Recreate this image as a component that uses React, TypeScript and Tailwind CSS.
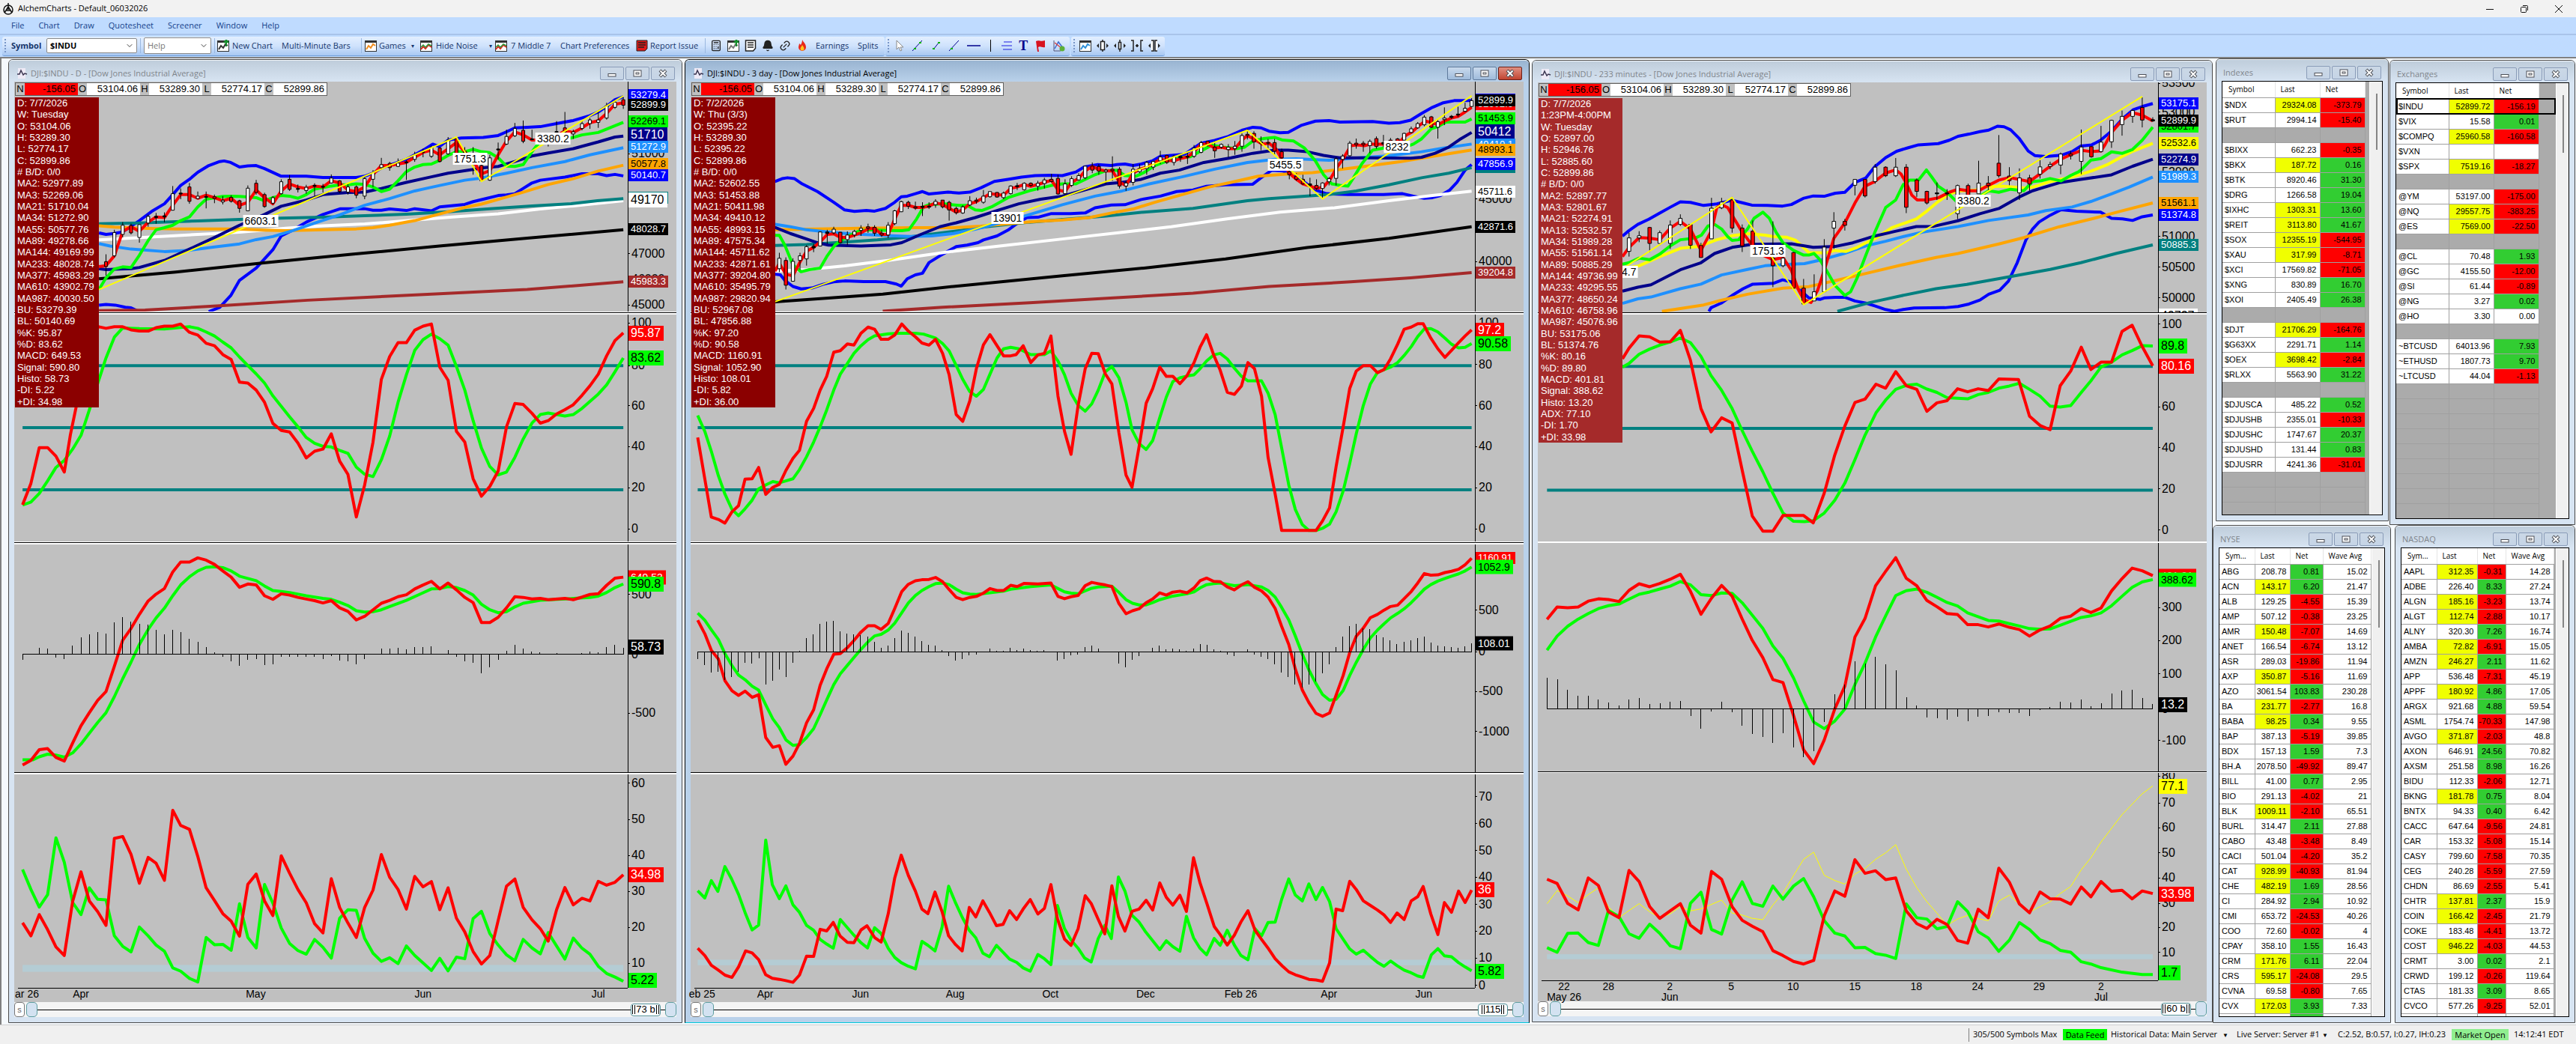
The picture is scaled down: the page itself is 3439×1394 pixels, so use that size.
import React from "react";
import { Bell, Link2, Calculator, ChevronDown } from "lucide-react";

type Tag = { y: number; t: string; c?: string };
type Line = { c: string; w: number; p: string };
type Frame = { x: number; w: number; x0: number; x1: number };

const RED = "#ff0000";
const LIME = "#00ff00";
const BLUE = "#0000ff";
const NAVY = "#00008b";
const SKY = "#1e90ff";
const ORANGE = "#ffa500";
const TEAL = "#008080";
const BROWN = "#a52a2a";
const YELLOW = "#ffff00";

const tagClass: Record<string, string> = {
  red: "bg-[#ff0000] text-white",
  lime: "bg-[#00ff00] text-black",
  blue: "bg-[#0000ff] text-white",
  navy: "bg-[#00008b] text-white",
  sky: "bg-[#1e90ff] text-white",
  orange: "bg-[#ffa500] text-black",
  teal: "bg-[#008080] text-white",
  brown: "bg-[#a52a2a] text-white",
  yellow: "bg-[#ffff00] text-black",
  white: "bg-white text-black",
  black: "bg-black text-white",
};

const pct = (n: number) => `${n * 100}%`;

function tagSize(t: string) {
  if (t.length >= 7) return "h-4 text-[13px] leading-4 w-[53px]";
  if (t.length === 6) return "h-[19px] text-[14px] leading-[19px] pr-1";
  return "h-5 text-[16px] leading-5 pr-1";
}

function Axis({ y, h, tags, open }: { y: number; h: number; tags: Tag[]; open?: boolean }) {
  return (
    <div className={`relative w-[65px] shrink-0 border-l border-black ${open ? "" : "overflow-hidden"}`}>
      {tags.map((g, i) =>
        g.c ? (
          <span
            key={i}
            className={`absolute left-0 -translate-y-1/2 whitespace-nowrap pl-[3px] ${tagSize(g.t)} ${tagClass[g.c]}`}
            style={{ top: pct((g.y - y) / h) }}
          >
            {g.t}
          </span>
        ) : (
          <span
            key={i}
            className="absolute left-0 flex -translate-y-1/2 items-center gap-0.5 whitespace-nowrap text-[16px] leading-5 text-black"
            style={{ top: pct((g.y - y) / h) }}
          >
            <i className="h-px w-0.5 bg-black" />
            {g.t}
          </span>
        )
      )}
    </div>
  );
}

function Plot({ f, y, h, children }: { f: Frame; y: number; h: number; children: React.ReactNode }) {
  return (
    <svg viewBox={`${f.x} ${y} ${f.w} ${h}`} preserveAspectRatio="none" className="absolute inset-0 size-full" aria-hidden="true">
      {children}
    </svg>
  );
}

function Lines({ items }: { items: Line[] }) {
  return (
    <>
      {items.map((l, i) => (
        <polyline key={i} points={l.p} fill="none" stroke={l.c} strokeWidth={l.w} strokeLinejoin="round" vectorEffect="non-scaling-stroke" />
      ))}
    </>
  );
}

function Candles({ data, w }: { data: string; w: number }) {
  return (
    <>
      {data.split(" ").map((s, i) => {
        const [x, hi, top, bot, lo, c] = s.split(",");
        const fill = c === "w" ? "#ffffff" : c === "r" ? RED : "#000000";
        return (
          <g key={i}>
            <line x1={x} x2={x} y1={hi} y2={lo} stroke="#000" strokeWidth={1} vectorEffect="non-scaling-stroke" />
            <rect x={+x - w / 2} y={top} width={w} height={Math.max(+bot - +top, 2)} fill={fill} stroke="#000" strokeWidth={1} vectorEffect="non-scaling-stroke" />
          </g>
        );
      })}
    </>
  );
}

function Histogram({ f, base, data }: { f: Frame; base: number; data: string }) {
  const v = data.split(" ");
  return (
    <g shapeRendering="crispEdges" stroke="#000" strokeWidth={1}>
      <line x1={f.x0} x2={f.x1} y1={base} y2={base} vectorEffect="non-scaling-stroke" />
      {v.map((t, i) => {
        const x = f.x0 + ((f.x1 - f.x0) * i) / (v.length - 1);
        return <line key={i} x1={x} x2={x} y1={base} y2={t} vectorEffect="non-scaling-stroke" />;
      })}
    </g>
  );
}

type Pane = { y: number; h: number; axis: Tag[]; lines: Line[] };
type ChartData = {
  title: string;
  frame: Frame;
  cw: number;
  price: Pane & { candles: string; zig: string; notes: { x: number; y: number; t: string }[] };
  osc: Pane & { levels: number[] };
  macd: Pane & { base: number; hist: string };
  di: Pane & { band: [number, number] };
  dates: { x: number; t: string; s?: string }[];
  bars: string;
  info: string[];
};

const daily: ChartData = {
  title: "DJI:$INDU - D - [Dow Jones Industrial Average]",
  frame: { x: 32, w: 1397, x0: 51, x1: 1419 },
  cw: 7,
  price: {
    y: 71,
    h: 751,
    axis: [
      { y: 222, t: "52000" }, { y: 307, t: "51000" }, { y: 633, t: "47000" }, { y: 716, t: "46000" }, { y: 800, t: "45000" },
      { y: 115, t: "53279.4", c: "blue" }, { y: 148, t: "52899.9", c: "black" }, { y: 201, t: "52269.1", c: "lime" },
      { y: 245, t: "51710", c: "navy" }, { y: 283, t: "51272.9", c: "sky" }, { y: 340, t: "50577.8", c: "orange" },
      { y: 378, t: "50140.7", c: "blue" }, { y: 451, t: "49278.7", c: "teal" }, { y: 458, t: "49170", c: "white" },
      { y: 554, t: "48028.7", c: "black" }, { y: 725, t: "45983.3", c: "brown" },
    ],
    lines: [
      { c: BLUE, w: 4, p: "225,565 241,570 260,567 279,562 317,525 345,495 374,470 393,440 411,410 431,390 450,367 475,345 500,332 510,330 525,335 545,350 564,346 583,345 602,355 640,380 697,380 735,384 811,384 830,380 849,370 870,352 925,325 963,295 985,275 1000,283 1020,262 1050,255 1100,253 1134,247 1153,235 1172,222 1200,220 1230,218 1267,208 1305,198 1343,182 1362,170 1381,152 1400,130 1419,120" },
      { c: BLUE, w: 4, p: "225,801 241,799 262,801 285,808 298,810 317,823" },
      { c: BLUE, w: 4, p: "475,822 500,808 525,770 545,720 583,680 621,620 640,575 664,558 697,530 735,505 775,486 830,486 849,491 868,491 887,487 925,492 944,486 982,493 1001,480 1058,472 1077,463 1100,455 1134,443 1153,441 1172,437 1191,420 1211,402 1230,393 1286,383 1325,372 1362,372 1381,378 1400,374 1419,379" },
      { c: "#ffffff", w: 4, p: "225,588 350,578 450,570 545,563 650,550 735,542 830,536 944,523 1030,513 1134,503 1230,487 1305,477 1419,460" },
      { c: TEAL, w: 4, p: "225,535 317,533 450,526 545,521 640,517 735,514 830,509 925,504 1020,496 1115,486 1211,477 1300,470 1360,460 1419,453" },
      { c: ORANGE, w: 4, p: "225,542 260,546 317,550 400,552 540,552 600,556 650,558 735,555 811,552 849,548 887,540 944,525 1001,503 1058,482 1096,471 1153,448 1191,432 1248,407 1305,388 1362,363 1419,344" },
      { c: SKY, w: 4, p: "225,600 250,608 298,618 374,626 431,622 488,611 545,601 583,587 621,577 668,557 716,533 773,506 830,475 887,453 944,428 1001,410 1058,393 1096,386 1153,370 1211,352 1286,332 1343,310 1419,287" },
      { c: NAVY, w: 4, p: "225,682 241,685 270,683 298,682 317,678 374,655 431,618 488,580 545,540 602,505 640,478 697,458 735,440 792,433 830,432 868,420 925,400 982,382 1020,370 1077,358 1096,353 1134,348 1172,332 1211,314 1248,304 1305,290 1362,268 1400,252 1419,249" },
      { c: "#000000", w: 4, p: "225,715 400,693 600,663 800,635 1000,608 1200,582 1419,555" },
      { c: BROWN, w: 4, p: "225,819 330,817 500,803 700,785 1000,764 1200,750 1419,725" },
      { c: LIME, w: 4, p: "225,750 241,712 260,683 279,676 298,678 317,638 337,590 355,555 374,548 393,540 411,525 431,513 450,480 469,455 488,450 507,446 526,445 545,446 564,448 583,450 602,460 621,450 640,443 659,445 678,452 697,440 716,422 735,417 754,412 773,408 792,408 811,405 830,407 849,415 868,430 887,422 906,395 925,365 944,350 963,342 982,340 1001,328 1020,312 1039,300 1058,300 1077,292 1096,300 1115,303 1134,320 1153,347 1172,348 1191,342 1211,300 1230,265 1248,245 1300,255 1325,245 1362,237 1400,215 1419,204" },
      { c: RED, w: 4, p: "225,675 241,672 260,640 279,560 298,545 317,560 337,530 355,513 374,515 393,475 411,440 431,440 450,452 469,442 488,450 507,460 526,452 545,475 564,465 583,425 602,450 621,470 640,428 659,405 678,415 697,420 716,412 735,415 754,395 773,402 792,425 811,430 830,415 849,375 868,345 887,345 906,340 925,335 944,318 963,302 982,295 1001,310 1020,290 1039,270 1058,300 1077,330 1096,372 1115,362 1134,310 1153,265 1172,235 1191,245 1211,262 1230,262 1248,265 1286,232 1305,237 1325,222 1343,205 1362,199 1381,175 1400,145 1419,140" },
    ],
    zig: "225,750 1039,252 1096,397 1419,118",
    candles:
      "241,635,659,675,705,r 260,555,564,640,645,w 279,530,540,570,580,w 298,535,541,565,570,r 317,538,538,580,597,w 337,505,511,533,545,w 355,500,511,515,535,k 374,498,509,513,530,k 393,412,437,491,491,w 411,420,435,438,455,k 431,402,415,462,470,r 450,430,445,453,455,w 469,430,446,449,485,k 488,440,447,453,468,r 507,445,459,464,472,w 526,442,449,462,466,r 545,457,460,485,499,r 564,410,419,493,493,w 583,392,403,433,440,r 602,434,440,479,483,r 621,445,450,468,473,w 640,390,398,437,440,w 659,376,390,423,428,r 678,407,420,423,433,k 697,408,416,427,437,w 716,403,410,413,445,k 735,405,413,416,433,k 754,374,386,402,404,w 773,393,395,430,435,r 792,405,415,432,440,w 811,410,415,442,452,r 830,380,388,445,455,w 849,360,368,390,415,w 868,320,342,352,358,w 887,333,338,352,362,r 906,322,337,348,350,w 925,328,333,336,392,k 944,300,310,325,333,w 963,290,299,302,318,k 982,280,285,315,320,w 1001,285,288,332,335,r 1020,252,262,307,310,w 1039,255,258,305,310,r 1058,285,300,303,310,k 1077,285,320,323,375,k 1096,320,345,395,398,r 1115,310,320,393,395,w 1134,270,291,294,325,k 1153,228,250,275,278,w 1172,206,224,248,252,w 1191,198,230,266,272,r 1211,228,258,261,262,k 1248,240,258,261,283,k 1267,200,234,237,238,k 1286,170,222,235,240,r 1305,228,235,242,258,w 1325,198,208,224,230,w 1343,190,196,208,225,w 1362,165,196,204,222,w 1381,140,150,190,195,w 1400,130,138,155,160,w 1419,122,130,148,160,r",
    notes: [{ x: 593, y: 527, t: "6603.1" }, { x: 1070, y: 323, t: "1751.3" }, { x: 1259, y: 257, t: "3380.2" }],
  },
  osc: {
    y: 833,
    h: 742,
    axis: [
      { y: 860, t: "100" }, { y: 1000, t: "80" }, { y: 1131, t: "60" }, { y: 1265, t: "40" }, { y: 1399, t: "20" }, { y: 1534, t: "0" },
      { y: 893, t: "95.87", c: "red" }, { y: 975, t: "83.62", c: "lime" },
    ],
    levels: [1000, 1203, 1406],
    lines: [
      { c: LIME, w: 4, p: "51,1456 70,1446 89,1418 108,1377 127,1333 146,1310 165,1273 184,1228 203,1145 225,1045 241,975 260,907 279,877 317,879 374,880 411,875 431,873 450,878 469,890 488,903 507,923 526,942 545,972 564,1000 583,1027 602,1057 621,1099 640,1133 659,1167 678,1200 697,1235 716,1254 735,1264 754,1266 773,1277 792,1287 811,1332 830,1355 849,1363 868,1308 887,1230 906,1120 925,1030 944,950 963,915 982,897 1001,912 1020,933 1039,1003 1058,1080 1077,1180 1096,1270 1115,1330 1134,1357 1153,1348 1172,1300 1191,1240 1211,1188 1230,1160 1248,1155 1286,1165 1305,1160 1325,1140 1362,1093 1381,1063 1400,1020 1419,975" },
      { c: RED, w: 4, p: "51,1455 70,1385 89,1268 108,1268 127,1296 146,1348 160,1225 173,1135 190,980 200,900 225,873 241,878 260,873 279,873 298,883 317,887 337,887 355,876 374,871 393,871 411,864 431,891 450,900 469,927 488,935 507,964 526,980 545,1054 564,1057 583,1080 602,1120 621,1189 640,1212 659,1217 678,1253 697,1302 716,1280 735,1273 754,1223 773,1312 792,1356 811,1495 830,1390 849,1250 868,1045 887,970 906,925 925,925 944,884 963,871 982,864 1001,1005 1020,1048 1039,1215 1058,1250 1077,1370 1096,1427 1115,1395 1134,1345 1153,1200 1172,1124 1191,1127 1211,1156 1230,1188 1248,1180 1267,1158 1286,1144 1305,1128 1325,1097 1343,1066 1362,1028 1381,968 1400,918 1419,893" },
    ],
  },
  macd: {
    y: 39,
    h: 697,
    base: 376,
    axis: [
      { y: 192, t: "500" }, { y: 376, t: "0" }, { y: 555, t: "-500" },
      { y: 139, t: "649.53", c: "red" }, { y: 160, t: "590.8", c: "lime" }, { y: 354, t: "58.73", c: "black" },
    ],
    hist: "391 377 355 358 385 389 348 323 314 307 312 277 261 275 282 284 300 314 300 307 328 337 353 369 384 396 410 391 390 408 406 382 384 384 384 384 389 381 394 397 405 389 373 358 358 355 360 353 353 351 375 362 382 397 401 433 414 391 364 346 358 367 369 375 371 375 375 371 367 369 353 346 356",
    lines: [
      { c: LIME, w: 4, p: "51,698 75,698 89,689 108,681 127,684 146,690 165,677 184,650 203,617 222,584 241,554 260,505 279,450 298,399 317,345 337,299 355,264 374,234 393,196 411,163 431,138 450,120 469,109 488,107 507,110 526,120 545,136 583,150 602,166 621,180 640,183 659,186 697,196 735,204 754,207 773,216 792,226 811,242 830,246 849,245 868,239 887,229 925,210 963,187 982,175 1001,174 1020,168 1039,171 1058,180 1077,194 1096,222 1115,239 1134,248 1153,245 1172,230 1191,219 1230,210 1286,206 1343,201 1362,197 1381,186 1400,171 1419,160" },
      { c: RED, w: 4, p: "51,714 70,700 89,667 108,664 127,691 146,702 165,647 184,594 203,554 222,516 241,489 260,412 279,332 298,296 317,253 337,212 355,191 374,174 393,123 411,93 431,93 450,80 469,87 488,100 507,120 526,139 545,170 564,160 583,163 602,196 621,207 640,190 659,194 678,201 697,206 716,211 735,218 754,211 773,233 792,244 811,270 830,259 849,239 868,219 887,210 906,199 925,193 944,175 963,163 982,152 1001,175 1020,157 1039,178 1058,201 1077,217 1096,278 1115,278 1134,262 1153,233 1172,199 1191,201 1211,206 1230,204 1248,208 1286,204 1305,208 1325,200 1343,192 1362,190 1381,164 1400,142 1419,139" },
    ],
  },
  di: {
    y: 743,
    h: 653,
    band: [1326, 1347],
    axis: [
      { y: 770, t: "60" }, { y: 881, t: "50" }, { y: 991, t: "40" }, { y: 1101, t: "30" }, { y: 1211, t: "20" }, { y: 1321, t: "10" },
      { y: 1050, t: "34.98", c: "red" }, { y: 1374, t: "5.22", c: "lime" },
    ],
    lines: [
      { c: LIME, w: 4, p: "51,1034 70,1095 89,1149 108,1111 127,937 146,1012 165,1135 184,1172 203,1090 222,1125 241,1127 260,1237 279,1269 298,1286 317,1210 337,1237 355,1265 374,1284 393,1335 411,1345 431,1367 450,1378 469,1242 488,1264 507,1263 526,1281 545,1139 564,1242 583,1274 602,1080 621,1137 640,1213 659,1260 678,1282 697,1293 716,1248 735,1272 754,1305 773,1183 792,1157 811,1159 830,1245 849,1290 868,1315 887,1304 906,1322 925,1268 944,1297 963,1320 982,1343 1001,1306 1020,1344 1039,1302 1058,1307 1077,1184 1096,1162 1115,1230 1134,1265 1153,1295 1172,1313 1191,1248 1211,1274 1230,1292 1248,1227 1267,1268 1286,1308 1305,1244 1325,1275 1343,1293 1362,1330 1381,1352 1400,1363 1419,1376" },
      { c: RED, w: 4, p: "51,1197 70,1237 89,1172 108,1218 127,1271 146,1297 165,1132 184,1041 203,1130 222,1163 241,1205 260,939 279,933 298,988 317,1076 337,997 355,1015 374,1067 393,853 411,899 431,911 450,994 469,1090 488,1129 507,1169 526,1192 545,1238 564,1079 583,1048 602,1130 621,1175 640,992 659,1045 678,1095 697,1136 716,1200 735,1228 754,1062 773,1150 792,1198 811,1242 830,1150 849,1097 868,988 887,1058 906,1095 925,1155 944,1055 963,1087 982,1071 1001,1157 1020,1090 1039,1183 1058,1225 1077,1285 1096,1323 1115,1297 1134,1190 1153,1085 1172,1063 1191,1150 1211,1188 1230,1215 1248,1253 1267,1157 1286,1089 1305,1142 1325,1122 1343,1130 1362,1070 1381,1082 1400,1073 1419,1050" },
    ],
  },
  dates: [{ x: 61, t: "ar 26" }, { x: 184, t: "Apr" }, { x: 582, t: "May" }, { x: 963, t: "Jun" }, { x: 1362, t: "Jul" }],
  bars: "73 b",
  info: ["D: 7/7/2026", "W: Tuesday", "O: 53104.06", "H: 53289.30", "L: 52774.17", "C: 52899.86", "# B/D: 0/0", "MA2: 52977.89", "MA3: 52269.06", "MA21: 51710.04", "MA34: 51272.90", "MA55: 50577.76", "MA89: 49278.66", "MA144: 49169.99", "MA233: 48028.74", "MA377: 45983.29", "MA610: 43902.79", "MA987: 40030.50", "BU: 53279.39", "BL: 50140.69", "%K: 95.87", "%D: 83.62", "MACD: 649.53", "Signal: 590.80", "Histo: 58.73", "-DI: 5.22", "+DI: 34.98"],
};

const threeDay: ChartData = {
  title: "DJI:$INDU - 3 day - [Dow Jones Industrial Average]",
  frame: { x: 17, w: 1441, x0: 30, x1: 1452 },
  cw: 6,
  price: {
    y: 71,
    h: 751,
    axis: [
      { y: 455, t: "45000" }, { y: 659, t: "40000" },
      { y: 130, t: "52967.1", c: "blue" }, { y: 145, t: "52602.6", c: "red" }, { y: 133, t: "52899.9", c: "black" }, { y: 191, t: "51453.9", c: "lime" },
      { y: 234, t: "50412", c: "navy" }, { y: 277, t: "49410.1", c: "sky" }, { y: 294, t: "48993.1", c: "orange" },
      { y: 351, t: "47575.3", c: "teal" }, { y: 339, t: "47856.9", c: "blue" }, { y: 430, t: "45711.6", c: "white" },
      { y: 546, t: "42871.6", c: "black" }, { y: 695, t: "39204.8", c: "brown" },
    ],
    lines: [
      { c: BLUE, w: 4, p: "172,397 185,388 195,385 208,388 222,405 250,430 280,465 300,490 318,495 340,492 355,494 375,485 392,465 404,447 415,445 430,437 443,430 455,438 490,432 510,435 530,432 550,418 575,397 600,390 625,383 650,378 678,377 700,378 725,366 740,350 765,342 790,345 800,342 815,340 830,345 845,340 865,330 880,315 900,312 925,308 940,290 955,272 980,263 1005,250 1030,230 1050,220 1065,222 1080,233 1100,238 1115,237 1140,213 1165,200 1190,198 1210,203 1270,201 1300,207 1320,205 1340,197 1360,175 1380,155 1400,140 1420,133 1452,133" },
      { c: BLUE, w: 4, p: "172,700 182,702 190,720 205,740 220,748 240,745 260,733 280,725 300,722 335,724 375,724 395,732 404,739 415,715 430,702 443,697 455,662 475,640 505,610 525,605 545,597 555,588 580,575 600,556 620,530 635,515 655,514 680,502 715,502 742,500 760,483 790,474 815,473 845,456 880,445 910,430 940,425 965,413 1000,408 1050,406 1065,385 1085,360 1105,363 1125,375 1145,400 1165,425 1185,437 1225,440 1290,440 1325,437 1345,445 1365,452 1380,450 1395,443 1412,425 1425,400 1440,360 1452,342" },
      { c: "#ffffff", w: 4, p: "172,690 230,685 300,673 380,655 440,640 500,625 600,605 700,585 800,565 900,545 1000,520 1100,497 1200,483 1300,460 1380,443 1452,429" },
      { c: TEAL, w: 4, p: "172,606 230,603 300,595 360,588 420,578 500,560 560,545 640,530 710,520 780,510 850,497 940,485 1040,460 1080,453 1140,446 1190,440 1240,428 1300,408 1360,385 1410,370 1452,352" },
      { c: ORANGE, w: 4, p: "172,555 330,550 430,548 500,548 550,543 600,535 650,528 700,523 750,515 790,500 830,487 870,465 920,440 970,415 1010,400 1060,380 1110,373 1160,368 1200,360 1260,347 1320,333 1370,318 1452,294" },
      { c: SKY, w: 4, p: "172,537 200,545 230,555 270,562 310,568 370,573 420,577 460,575 500,567 540,553 600,525 640,505 700,473 760,445 810,428 860,405 920,382 980,357 1040,335 1090,325 1130,323 1190,328 1230,322 1300,313 1360,300 1400,288 1452,275" },
      { c: NAVY, w: 4, p: "172,547 200,567 230,585 250,597 270,605 330,608 385,604 405,597 440,570 475,545 505,532 540,515 580,492 620,470 660,455 700,445 740,425 780,405 810,400 845,390 880,370 915,360 960,335 1010,320 1050,305 1090,295 1115,295 1150,300 1180,312 1210,320 1260,320 1340,321 1360,318 1385,305 1410,285 1430,260 1452,237" },
      { c: "#000000", w: 4, p: "172,790 270,778 370,765 500,740 700,705 850,680 1000,650 1150,613 1300,583 1452,545" },
      { c: BROWN, w: 4, p: "370,821 480,808 640,793 800,777 940,762 1080,740 1230,725 1340,712 1452,695" },
      { c: LIME, w: 4, p: "172,573 180,573 190,605 205,670 220,692 235,685 255,680 268,640 282,605 300,582 325,560 345,555 380,557 405,558 418,555 432,520 445,480 455,473 480,470 510,475 525,475 540,490 552,492 570,480 600,450 640,427 680,410 700,405 725,405 740,392 760,375 780,362 800,360 815,378 835,380 850,368 870,345 890,332 915,320 935,316 955,297 975,278 995,285 1020,290 1035,285 1050,265 1070,257 1090,253 1105,262 1125,265 1145,288 1165,330 1180,375 1195,405 1210,410 1225,412 1235,385 1250,340 1270,295 1290,288 1330,285 1345,275 1360,258 1378,225 1390,218 1405,203 1440,203 1452,193" },
      { c: RED, w: 4, p: "172,690 180,665 192,700 205,705 218,660 230,625 243,612 255,595 268,570 280,568 292,580 305,580 318,572 330,565 343,552 355,550 368,570 380,570 392,520 404,475 417,475 430,482 443,482 455,478 467,467 480,472 492,485 505,497 517,490 530,470 542,463 555,450 567,437 580,440 592,442 605,420 617,415 630,407 642,413 655,407 667,400 680,393 692,425 705,430 717,400 730,387 742,362 755,348 767,358 780,363 792,362 805,400 817,410 830,370 842,357 855,350 867,338 880,325 892,328 905,330 917,322 930,317 942,300 955,275 967,275 980,288 992,285 1005,290 1017,290 1030,262 1040,247 1055,262 1067,275 1080,272 1092,290 1105,330 1117,370 1130,390 1142,405 1155,412 1167,420 1180,415 1192,390 1205,350 1217,320 1230,280 1242,278 1255,280 1267,275 1280,275 1292,275 1305,275 1320,268 1330,248 1343,235 1355,215 1367,200 1380,205 1390,212 1402,200 1415,190 1427,185 1440,170 1452,155" },
    ],
    zig: "172,790 1040,230 1178,454 1452,117",
    candles:
      "180,630,648,682,693,w 192,645,655,736,750,r 205,648,658,723,723,w 218,630,640,655,685,w 230,605,610,650,672,w 243,600,609,614,628,k 255,560,562,608,608,w 268,555,562,567,600,k 280,545,553,565,570,w 292,562,563,597,600,r 305,560,572,587,605,w 318,555,560,572,580,w 330,540,550,557,575,w 343,535,545,550,565,r 355,540,547,566,575,r 368,555,566,572,578,r 380,530,540,572,582,w 392,490,493,535,540,w 404,460,463,496,497,w 417,460,465,478,487,r 430,463,480,484,490,r 443,465,478,482,510,k 455,465,478,481,487,k 467,455,462,473,483,w 480,458,458,480,485,r 492,460,465,490,525,r 505,480,485,499,505,r 517,475,480,500,503,w 530,445,460,474,478,w 542,450,458,462,470,r 555,425,445,465,470,w 567,430,430,447,450,w 580,432,433,448,450,r 592,430,435,450,455,w 605,410,412,437,440,w 617,402,411,414,425,k 630,400,403,424,427,w 642,400,403,410,415,r 655,395,403,413,427,w 667,385,392,404,420,w 680,372,390,397,400,r 692,375,387,438,440,r 705,390,405,437,440,w 717,380,388,410,415,w 730,370,378,392,395,w 742,345,347,385,390,w 755,335,347,360,370,r 767,340,348,363,375,r 780,355,360,365,405,w 792,315,357,362,395,r 805,350,357,412,420,r 817,395,402,412,428,w 830,340,357,400,410,w 842,340,355,365,370,w 855,330,335,355,375,w 867,330,332,350,360,w 880,297,317,330,340,w 892,310,312,335,340,r 905,310,315,335,345,w 917,308,315,320,333,k 930,300,315,318,340,k 942,278,288,315,320,w 955,265,270,302,305,w 967,265,266,278,283,r 980,265,285,297,320,r 992,273,276,285,290,w 1005,275,285,293,318,w 1017,265,282,290,310,w 1030,240,247,282,300,w 1040,225,243,247,260,r 1052,233,240,268,290,r 1065,250,268,272,295,k 1078,258,270,272,290,r 1090,258,270,298,310,r 1103,290,300,320,330,r 1117,355,365,375,390,r 1130,370,380,390,395,r 1142,375,390,405,408,r 1155,385,405,410,445,k 1167,390,410,420,425,r 1178,400,402,420,450,w 1190,383,388,398,410,w 1203,318,323,387,410,w 1215,308,314,325,355,w 1228,265,272,313,315,w 1240,257,272,277,290,r 1253,265,272,277,300,r 1265,260,266,280,305,w 1277,250,257,283,290,r 1290,245,270,275,285,k 1303,255,262,275,285,r 1316,255,258,270,275,r 1328,238,240,262,262,w 1341,218,225,237,240,w 1353,203,208,222,225,w 1365,180,187,212,217,w 1378,183,186,220,223,r 1390,195,202,220,257,w 1402,155,190,195,213,w 1415,180,184,188,193,k 1427,153,177,180,187,k 1440,140,158,168,170,w 1452,125,133,152,155,w",
    notes: [{ x: 599, y: 515, t: "13901" }, { x: 1110, y: 342, t: "5455.5" }, { x: 1315, y: 284, t: "8232" }],
  },
  osc: {
    y: 833,
    h: 742,
    axis: [
      { y: 860, t: "100" }, { y: 997, t: "80" }, { y: 1131, t: "60" }, { y: 1265, t: "40" }, { y: 1399, t: "20" }, { y: 1534, t: "0" },
      { y: 884, t: "97.2", c: "red" }, { y: 929, t: "90.58", c: "lime" },
    ],
    levels: [1000, 1203, 1406],
    lines: [
      { c: LIME, w: 4, p: "30,1163 43,1215 55,1280 68,1360 80,1420 93,1470 105,1491 117,1468 130,1440 142,1403 155,1390 168,1379 180,1383 192,1377 205,1370 217,1340 230,1298 243,1250 255,1200 267,1145 280,1080 292,1028 305,993 317,960 330,935 343,915 355,903 380,896 400,894 430,894 445,897 467,910 480,928 492,952 505,1000 517,1045 530,1085 542,1100 555,1078 567,1028 580,975 592,945 605,940 620,945 642,964 667,964 679,952 692,985 704,1030 716,1090 729,1130 742,1149 754,1125 766,1080 779,1020 791,1003 804,1040 817,1120 828,1210 841,1255 854,1274 866,1245 879,1170 891,1103 903,1052 916,1040 929,1034 942,1030 953,1010 965,985 978,965 990,960 1003,978 1016,1008 1029,1035 1041,1050 1066,1050 1078,1090 1091,1160 1103,1270 1116,1390 1128,1470 1141,1520 1153,1539 1166,1539 1178,1532 1191,1518 1203,1478 1216,1410 1228,1320 1240,1223 1253,1130 1266,1060 1279,1022 1303,1005 1316,990 1328,967 1341,938 1353,905 1365,880 1377,879 1390,890 1403,910 1415,930 1428,942 1440,940 1452,928" },
      { c: RED, w: 4, p: "30,1235 43,1370 55,1495 68,1503 80,1515 93,1478 105,1458 117,1371 130,1370 142,1333 155,1421 168,1398 180,1388 192,1343 205,1303 217,1277 230,1182 243,1140 255,1080 267,1035 280,956 292,951 305,929 317,933 330,894 343,874 355,881 367,914 380,914 392,900 405,864 417,887 430,906 442,926 455,933 467,914 480,960 492,1030 505,1160 517,1182 530,1115 542,1010 555,932 567,899 580,935 592,968 605,968 615,964 628,935 642,990 655,965 667,960 679,903 692,1100 704,1215 716,1290 729,1130 742,1010 754,960 766,961 779,1027 791,1060 804,1220 817,1358 828,1398 841,1265 854,1123 866,1075 879,1005 891,1035 903,1035 916,1059 929,1033 942,990 953,940 965,899 978,965 990,1015 1003,1087 1016,1094 1029,1067 1041,990 1053,1010 1066,1100 1078,1300 1091,1420 1103,1539 1166,1539 1178,1508 1191,1465 1203,1330 1216,1200 1228,1075 1240,1018 1253,1000 1266,1000 1279,1023 1291,1013 1303,978 1316,930 1328,881 1341,874 1353,863 1363,863 1377,910 1390,945 1403,973 1415,950 1428,925 1440,903 1452,883" },
    ],
  },
  macd: {
    y: 39,
    h: 697,
    base: 369,
    axis: [
      { y: 240, t: "500" }, { y: 367, t: "0" }, { y: 489, t: "-500" }, { y: 612, t: "-1000" },
      { y: 81, t: "1160.91", c: "red" }, { y: 107, t: "1052.9", c: "lime" }, { y: 342, t: "108.01", c: "black" },
    ],
    hist: "390 408 431 429 454 445 429 401 403 387 467 456 422 445 401 365 326 314 282 276 273 305 312 314 316 320 337 355 348 326 303 309 321 335 346 348 362 381 394 390 379 375 368 358 364 364 356 362 358 362 364 362 368 394 390 379 375 353 348 358 368 368 403 415 392 381 368 355 348 360 358 360 364 358 344 346 360 364 376 381 368 360 376 383 390 406 431 445 467 477 467 458 433 406 353 321 289 282 296 298 316 323 332 344 337 332 326 321 339 348 351 353 355 351 342",
    lines: [
      { c: LIME, w: 4, p: "30,249 43,271 55,300 68,330 80,373 93,410 105,439 117,453 130,473 142,485 155,530 168,573 180,600 192,637 205,654 217,652 230,630 243,603 255,560 267,515 280,468 292,435 305,409 317,385 330,360 343,337 355,319 367,314 380,301 392,280 405,248 417,218 430,195 442,180 455,168 467,159 480,157 492,162 505,176 517,187 530,191 542,192 567,187 592,182 605,176 642,168 679,163 692,174 704,184 716,188 729,190 742,181 754,173 766,169 791,167 804,186 817,208 829,219 841,224 854,224 866,217 879,208 903,197 929,190 942,184 953,172 965,162 978,159 990,157 1016,165 1041,162 1066,169 1078,180 1091,200 1103,232 1116,270 1128,319 1141,375 1153,423 1166,465 1178,498 1191,516 1203,513 1216,486 1228,440 1240,400 1253,360 1266,325 1279,301 1291,282 1303,264 1316,250 1328,236 1341,217 1353,197 1365,176 1377,162 1390,151 1403,143 1415,136 1428,129 1440,120 1452,108" },
      { c: RED, w: 4, p: "30,271 43,312 55,363 68,390 80,456 93,487 105,501 117,488 130,507 142,499 155,630 168,660 180,655 192,712 205,687 217,648 230,585 243,545 255,470 267,420 280,375 292,373 305,355 317,333 330,307 343,288 355,288 367,299 380,281 392,235 405,183 417,161 430,150 442,147 455,146 467,140 480,153 492,177 505,201 517,208 530,201 542,198 555,188 567,174 580,180 592,180 605,164 617,168 630,158 655,160 679,157 692,198 704,205 716,199 729,195 742,165 754,155 766,159 779,163 791,168 804,220 817,251 829,242 841,236 854,217 866,206 879,187 891,194 903,185 916,182 929,187 942,172 953,150 965,142 978,152 990,153 1003,169 1016,178 1029,163 1041,153 1053,170 1066,181 1078,200 1091,235 1103,290 1116,345 1128,420 1141,485 1153,523 1166,556 1178,565 1191,555 1203,500 1216,440 1228,370 1240,320 1253,295 1266,263 1279,253 1291,240 1303,229 1316,225 1328,205 1341,183 1353,157 1365,128 1377,133 1390,132 1403,125 1415,121 1428,115 1440,101 1452,81" },
    ],
  },
  di: {
    y: 743,
    h: 653,
    band: [1310, 1327],
    axis: [
      { y: 811, t: "70" }, { y: 894, t: "60" }, { y: 976, t: "50" }, { y: 1058, t: "40" }, { y: 1141, t: "30" }, { y: 1223, t: "20" }, { y: 1305, t: "10" }, { y: 1388, t: "0" },
      { y: 1096, t: "36", c: "red" }, { y: 1345, t: "5.82", c: "lime" },
    ],
    lines: [
      { c: LIME, w: 4, p: "30,1099 43,1121 55,1068 67,1101 80,1025 92,1062 105,1110 118,1170 130,1219 142,1204 155,944 167,1080 180,1123 192,1084 205,1142 217,1165 230,1205 243,1220 255,1248 267,1262 279,1275 292,1187 305,1212 317,1235 330,1258 342,1274 355,1212 367,1230 380,1275 392,1303 404,1319 417,1330 430,1338 442,1254 453,1266 466,1283 479,1210 491,1085 504,1137 516,1180 529,1220 541,1243 554,1290 566,1301 579,1266 603,1308 616,1318 628,1335 641,1345 655,1294 667,1307 679,1325 691,1144 704,1215 716,1250 729,1275 741,1305 753,1317 766,1245 778,1205 790,1245 803,1057 815,1100 828,1174 841,1195 853,1225 879,1279 891,1252 903,1270 916,1284 928,1177 941,1243 953,1275 965,1295 979,1245 990,1266 1003,1220 1016,1265 1028,1297 1041,1310 1054,1215 1066,1237 1078,1196 1091,1195 1103,1125 1116,1063 1128,1112 1141,1130 1153,1078 1166,1126 1178,1089 1191,1132 1203,1215 1215,1245 1228,1277 1240,1293 1253,1281 1266,1300 1279,1318 1291,1330 1303,1314 1315,1328 1328,1342 1341,1350 1353,1360 1363,1364 1378,1295 1390,1276 1402,1298 1415,1301 1428,1319 1440,1332 1452,1344" },
      { c: RED, w: 4, p: "30,1275 43,1297 55,1327 68,1342 80,1357 93,1364 105,1332 118,1283 130,1289 142,1310 155,1356 167,1367 180,1370 192,1374 205,1379 217,1357 230,1299 243,1300 255,1217 267,1222 279,1196 292,1238 305,1257 317,1258 330,1219 341,1206 355,1242 367,1256 380,1170 392,1060 404,990 417,1052 430,1100 442,1155 453,1169 466,1103 479,1163 491,1237 504,1264 516,1283 529,1150 541,1179 554,1130 566,1165 579,1206 591,1202 603,1160 616,1187 628,1155 641,1126 655,1170 667,1153 679,1080 691,1185 704,1247 716,1266 729,1215 742,1114 753,1138 766,1187 778,1231 791,1084 803,1178 815,1222 828,1162 841,1155 854,1128 866,1158 879,1075 891,1119 903,1143 916,1113 928,1162 941,998 953,1075 966,1140 979,1208 990,1233 1003,1265 1016,1235 1029,1192 1041,1160 1054,1220 1066,1248 1079,1277 1091,1307 1104,1329 1116,1347 1128,1356 1141,1363 1153,1370 1166,1372 1178,1376 1191,1320 1203,1155 1215,1160 1228,1070 1240,1095 1253,1130 1266,1144 1279,1158 1291,1173 1303,1196 1315,1167 1328,1187 1341,1130 1353,1117 1363,1086 1377,1170 1390,1233 1402,1135 1415,1165 1428,1100 1440,1135 1452,1097" },
    ],
  },
  dates: [{ x: 38, t: "eb 25" }, { x: 154, t: "Apr" }, { x: 329, t: "Jun" }, { x: 503, t: "Aug" }, { x: 678, t: "Oct" }, { x: 853, t: "Dec" }, { x: 1028, t: "Feb 26" }, { x: 1190, t: "Apr" }, { x: 1364, t: "Jun" }],
  bars: "115",
  info: ["D: 7/2/2026", "W: Thu (3/3)", "O: 52395.22", "H: 53289.30", "L: 52395.22", "C: 52899.86", "# B/D: 0/0", "MA2: 52602.55", "MA3: 51453.88", "MA21: 50411.98", "MA34: 49410.12", "MA55: 48993.15", "MA89: 47575.34", "MA144: 45711.62", "MA233: 42871.61", "MA377: 39204.80", "MA610: 35495.79", "MA987: 29820.94", "BU: 52967.08", "BL: 47856.88", "%K: 97.20", "%D: 90.58", "MACD: 1160.91", "Signal: 1052.90", "Histo: 108.01", "-DI: 5.82", "+DI: 36.00"],
};

const intraday: ChartData = {
  title: "DJI:$INDU - 233 minutes - [Dow Jones Industrial Average]",
  frame: { x: 22, w: 1414, x0: 43, x1: 1424 },
  cw: 8,
  price: {
    y: 76,
    h: 751,
    axis: [
      { y: 79, t: "53500" }, { y: 173, t: "53000" }, { y: 370, t: "52000" }, { y: 579, t: "51000" }, { y: 680, t: "50500" }, { y: 780, t: "50000" },
      { y: 145, t: "53175.1", c: "blue" }, { y: 220, t: "52801.7", c: "lime" }, { y: 200, t: "52899.9", c: "black" }, { y: 273, t: "52532.6", c: "yellow" },
      { y: 327, t: "52274.9", c: "navy" }, { y: 384, t: "51989.3", c: "sky" }, { y: 469, t: "51561.1", c: "orange" },
      { y: 508, t: "51374.8", c: "blue" }, { y: 607, t: "50885.3", c: "teal" }, { y: 839, t: "49737", c: "white" },
    ],
    lines: [
      { c: BLUE, w: 4, p: "215,578 230,560 250,540 275,523 300,503 325,483 347,466 370,468 400,478 430,473 465,461 490,470 510,477 545,478 580,480 600,475 627,455 650,447 675,448 700,438 722,435 745,403 770,388 790,352 815,322 840,301 865,290 890,280 935,276 960,265 980,252 1005,245 1030,237 1050,232 1070,219 1085,221 1100,231 1120,260 1140,300 1155,315 1180,318 1215,314 1240,302 1260,284 1285,280 1305,265 1330,235 1355,195 1380,165 1400,155 1424,145" },
      { c: BLUE, w: 4, p: "412,824 417,812 440,797 465,772 490,750 512,735 560,732 580,721 600,728 620,755 640,780 665,785 675,780 700,778 722,778 745,790 770,797 790,806 815,818 835,824 855,818 880,813 950,812 980,808 1005,800 1030,787 1050,768 1075,755 1095,725 1115,665 1135,590 1150,555 1165,532 1190,510 1215,492 1250,497 1305,500 1330,520 1355,522 1378,527 1400,515 1424,509" },
      { c: TEAL, w: 4, p: "705,824 780,795 850,773 930,750 1000,736 1100,710 1190,687 1260,665 1340,635 1424,607" },
      { c: ORANGE, w: 4, p: "305,824 400,803 440,788 500,768 581,748 640,743 680,730 720,717 770,700 850,673 930,648 980,635 1075,603 1130,583 1210,548 1290,520 1350,497 1424,470" },
      { c: SKY, w: 4, p: "215,798 250,783 280,777 347,750 394,735 441,705 500,687 540,675 581,671 630,668 670,655 720,635 770,610 815,595 860,578 900,565 980,547 1050,527 1140,509 1180,495 1240,483 1283,465 1330,440 1370,418 1400,400 1424,385" },
      { c: YELLOW, w: 4, p: "215,685 253,675 300,645 347,618 390,612 430,590 465,577 500,570 540,575 560,580 590,582 610,592 640,632 680,633 700,625 725,628 750,615 770,600 792,585 830,550 860,535 885,522 910,495 935,465 960,440 985,430 1020,428 1040,418 1080,415 1130,421 1150,418 1190,400 1240,385 1285,365 1320,345 1354,318 1380,300 1424,275" },
      { c: NAVY, w: 4, p: "215,758 250,745 280,737 347,688 394,665 425,635 465,615 510,605 600,603 650,615 700,612 740,600 790,578 835,563 885,547 925,546 980,528 1030,505 1073,488 1120,450 1150,430 1213,403 1260,393 1330,378 1378,350 1424,327" },
      { c: LIME, w: 4, p: "215,670 230,665 253,650 277,655 300,637 324,610 347,590 380,585 395,575 410,545 425,540 441,555 455,580 465,592 480,590 500,555 515,520 535,500 550,520 565,565 581,600 605,625 628,640 640,640 652,635 665,655 680,690 700,740 722,772 735,760 750,715 770,640 792,560 815,485 838,460 855,410 870,395 890,395 908,362 920,385 935,415 955,435 980,470 1000,465 1027,450 1050,430 1073,435 1100,425 1130,430 1150,400 1170,397 1190,390 1215,398 1237,380 1255,368 1262,360 1283,330 1306,325 1330,303 1354,308 1378,295 1400,265 1424,222" },
      { c: RED, w: 4, p: "215,645 230,615 253,583 277,585 300,590 324,552 347,530 370,555 394,625 418,560 430,485 441,475 455,485 465,510 488,565 512,610 535,640 558,655 581,648 600,690 615,750 628,785 645,795 660,755 675,690 697,585 722,535 745,470 768,415 790,400 815,372 838,362 850,375 862,405 875,445 887,460 910,460 935,453 960,435 980,425 1005,430 1027,430 1050,412 1073,395 1097,387 1120,393 1143,400 1167,375 1190,350 1213,328 1237,312 1262,298 1283,302 1306,300 1315,280 1330,240 1354,200 1378,175 1400,183 1424,202" },
    ],
    zig: "215,685 465,452 628,802 1400,122",
    candles:
      "230,567,584,628,645,w 253,562,577,584,598,w 277,548,550,602,630,r 300,560,567,602,608,w 324,527,542,602,620,w 347,507,520,540,545,w 370,540,540,608,620,r 394,600,609,648,648,r 418,453,487,587,587,w 441,453,467,486,490,w 465,450,460,552,567,r 488,540,552,610,630,r 512,527,562,610,612,r 558,530,650,675,745,r 581,600,650,675,680,w 605,630,632,748,750,r 628,718,748,800,800,r 652,703,760,790,790,w 675,588,614,760,762,w 697,500,530,552,620,w 722,522,530,543,560,r 745,392,393,412,445,w 768,392,393,447,452,r 791,343,353,400,407,w 815,350,353,381,385,r 838,323,353,381,385,w 862,343,353,484,503,r 886,390,395,432,450,r 909,430,432,470,475,r 932,403,437,440,460,k 955,425,437,440,460,k 979,410,413,505,523,w 1003,407,413,445,450,r 1027,332,405,440,440,w 1049,382,405,413,428,r 1073,248,340,381,387,r 1097,353,382,397,412,r 1120,357,388,437,460,w 1143,378,388,408,430,r 1167,323,352,376,390,w 1190,335,344,350,360,w 1214,305,310,346,376,w 1237,300,310,316,328,r 1261,230,287,334,376,w 1284,284,286,319,322,r 1306,218,271,302,305,w 1330,198,200,270,290,w 1354,168,187,214,250,w 1378,165,168,187,208,w 1400,125,158,199,223,r 1424,190,198,202,205,k",
    notes: [{ x: 210, y: 695, t: "4344.7" }, { x: 547, y: 627, t: "1751.3" }, { x: 1015, y: 463, t: "3380.2" }],
  },
  osc: {
    y: 835,
    h: 743,
    axis: [
      { y: 866, t: "100" }, { y: 1003, t: "80" }, { y: 1137, t: "60" }, { y: 1271, t: "40" }, { y: 1406, t: "20" }, { y: 1540, t: "0" },
      { y: 938, t: "89.8", c: "lime" }, { y: 1004, t: "80.16", c: "red" },
    ],
    levels: [1005, 1208, 1410],
    lines: [
      { c: LIME, w: 4, p: "215,1007 230,995 253,965 277,948 300,935 324,925 347,912 370,927 394,972 417,1035 441,1083 465,1143 488,1215 511,1283 535,1350 558,1420 581,1485 605,1512 630,1513 650,1510 675,1485 699,1443 722,1387 745,1310 768,1230 793,1157 815,1115 838,1080 862,1067 886,1063 909,1079 932,1090 955,1107 1002,1111 1026,1097 1049,1090 1073,1076 1097,1069 1120,1060 1143,1080 1167,1102 1190,1135 1213,1138 1237,1133 1261,1090 1283,1052 1306,1007 1330,991 1354,967 1377,953 1400,937 1424,938" },
      { c: RED, w: 4, p: "215,980 230,945 253,905 277,908 300,925 324,924 347,887 370,985 394,1143 417,1219 441,1173 465,1190 488,1345 511,1495 535,1544 558,1544 581,1493 628,1493 650,1517 675,1420 699,1295 722,1200 745,1123 768,1112 793,1063 815,1076 838,1022 862,1068 886,1080 909,1152 932,1124 955,1117 979,1078 1002,1088 1026,1078 1049,1084 1073,1046 1118,1048 1143,1168 1167,1198 1190,1212 1213,1068 1237,1020 1261,942 1283,1015 1306,991 1330,991 1354,890 1377,870 1400,940 1424,1003" },
    ],
  },
  macd: {
    y: 37,
    h: 699,
    base: 545,
    axis: [
      { y: 235, t: "300" }, { y: 336, t: "200" }, { y: 438, t: "100" }, { y: 545, t: "0" }, { y: 641, t: "-100" },
      { y: 137, t: "401.81", c: "red" }, { y: 149, t: "388.62", c: "lime" }, { y: 531, t: "13.2", c: "black" },
    ],
    hist: "449 454 486 504 504 516 525 534 516 511 529 527 523 520 566 605 552 523 555 596 621 630 649 619 662 692 674 584 500 470 399 405 385 408 426 509 534 571 573 578 569 582 569 566 555 557 557 566 548 540 523 525 516 536 527 497 488 486 511 530",
    lines: [
      { c: LIME, w: 4, p: "43,365 66,322 90,292 114,270 137,253 160,238 183,229 207,224 230,209 253,194 277,187 300,178 324,169 347,155 370,165 394,195 418,198 441,190 465,191 488,220 511,258 535,298 558,352 581,390 605,450 628,520 651,585 675,605 699,582 722,545 745,470 768,405 792,325 815,260 838,198 862,183 886,178 909,188 932,203 955,219 979,230 1002,251 1049,274 1073,276 1097,284 1120,291 1143,299 1167,301 1190,300 1213,289 1261,265 1283,260 1306,251 1330,229 1354,200 1377,173 1400,156 1424,149" },
      { c: RED, w: 4, p: "43,271 66,233 90,235 114,233 137,215 160,208 183,210 207,216 230,182 253,162 277,171 300,161 324,148 347,133 370,185 394,255 418,206 441,167 465,200 488,270 511,335 535,388 558,455 581,464 605,565 628,670 651,712 675,640 699,545 722,475 745,325 768,268 792,168 815,124 838,82 862,145 886,168 909,213 932,232 955,253 979,256 1002,287 1026,287 1049,294 1073,285 1097,295 1120,302 1143,322 1167,303 1190,291 1213,268 1237,261 1261,238 1283,250 1306,236 1330,184 1354,146 1377,114 1400,122 1424,137" },
    ],
  },
  di: {
    y: 740,
    h: 636,
    band: [1296, 1311],
    axis: [
      { y: 750, t: "80" }, { y: 832, t: "70" }, { y: 908, t: "60" }, { y: 985, t: "50" }, { y: 1062, t: "40" }, { y: 1140, t: "30" }, { y: 1214, t: "20" }, { y: 1290, t: "10" },
      { y: 781, t: "77.1", c: "yellow" }, { y: 1111, t: "33.98", c: "red" }, { y: 1354, t: "1.7", c: "lime" },
    ],
    lines: [
      { c: YELLOW, w: 1, p: "43,1141 66,1101 90,1117 114,1138 137,1113 160,1093 183,1150 207,1184 230,1162 253,1141 277,1166 300,1184 324,1172 347,1150 370,1163 394,1157 441,1130 465,1170 488,1176 511,1186 535,1190 558,1145 581,1108 605,1055 628,1005 651,983 675,1054 699,1070 722,1081 745,1050 768,1033 792,1005 815,985 838,960 862,1035 886,1092 909,1135 932,1170 955,1207 979,1188 1002,1177 1026,1187 1049,1193 1073,1133 1097,1115 1120,1143 1143,1167 1167,1150 1190,1135 1213,1110 1237,1088 1261,1037 1283,1000 1306,952 1330,910 1354,868 1377,836 1400,804 1424,780" },
      { c: LIME, w: 4, p: "43,1276 66,1290 90,1232 114,1231 137,1260 160,1269 183,1162 207,1180 230,1233 253,1247 277,1204 300,1232 324,1270 347,1279 370,1140 394,1106 418,1220 441,1234 465,1130 488,1074 511,1140 535,1149 558,1087 581,1127 605,1087 628,1064 651,1120 675,1193 699,1231 722,1240 745,1276 768,1275 792,1294 815,1299 838,1309 862,1142 886,1184 909,1188 932,1218 955,1211 979,1135 1002,1165 1026,1227 1049,1246 1073,1287 1097,1253 1120,1199 1143,1220 1167,1252 1190,1263 1213,1284 1237,1290 1261,1319 1283,1326 1306,1337 1354,1351 1400,1358 1424,1358" },
      { c: RED, w: 4, p: "43,1066 66,1079 90,1140 114,1160 137,1062 160,1085 183,1166 207,1184 230,1039 253,1073 277,1150 300,1186 324,1163 347,1141 370,1207 394,1231 418,1042 441,1066 465,1150 488,1192 511,1210 535,1227 558,1285 581,1300 605,1318 628,1326 651,1315 675,1178 699,1102 722,1118 745,1006 768,1048 792,1040 815,1067 838,1062 862,1163 886,1202 909,1217 932,1189 955,1205 979,1254 1002,1262 1026,1158 1049,1184 1073,1032 1097,1075 1120,1142 1143,1169 1167,1105 1190,1126 1213,1127 1237,1142 1261,1090 1283,1120 1306,1073 1330,1103 1354,1100 1377,1126 1400,1102 1424,1110" },
    ],
  },
  dates: [
    { x: 82, t: "22", s: "May 26" }, { x: 183, t: "28" }, { x: 323, t: "2", s: "Jun" }, { x: 463, t: "5" }, { x: 604, t: "10" }, { x: 745, t: "15" },
    { x: 885, t: "18" }, { x: 1025, t: "24" }, { x: 1165, t: "29" }, { x: 1306, t: "2", s: "Jul" },
  ],
  bars: "60 b",
  info: ["D: 7/7/2026", "1:23PM-4:00PM", "W: Tuesday", "O: 52897.00", "H: 52946.76", "L: 52885.60", "C: 52899.86", "# B/D: 0/0", "MA2: 52897.77", "MA3: 52801.67", "MA21: 52274.91", "MA13: 52532.57", "MA34: 51989.28", "MA55: 51561.14", "MA89: 50885.29", "MA144: 49736.99", "MA233: 49295.55", "MA377: 48650.24", "MA610: 46758.96", "MA987: 45076.96", "BU: 53175.06", "BL: 51374.76", "%K: 80.16", "%D: 89.80", "MACD: 401.81", "Signal: 388.62", "Histo: 13.20", "ADX: 77.10", "-DI: 1.70", "+DI: 33.98"],
};

function WindowButtons({ active }: { active?: boolean }) {
  const base = "flex h-[18px] w-8 items-center justify-center rounded-[2px] border";
  const plain = active
    ? "border-[#5f7a9c] bg-gradient-to-b from-[#c9daed] to-[#9fbbdb]"
    : "border-[#8a9cb8] bg-gradient-to-b from-[#cbd8e6] to-[#c5d4e6]";
  return (
    <div className="flex gap-0.5">
      <button type="button" aria-label="Minimize" className={`${base} ${plain}`}>
        <svg width="12" height="12" viewBox="0 0 12 12"><rect x="1" y="6.500" width="10" height="3.500" fill="#fff" stroke="#4c4f56" /></svg>
      </button>
      <button type="button" aria-label="Restore" className={`${base} ${plain}`}>
        <svg width="12" height="12" viewBox="0 0 12 12"><rect x="1" y="2" width="10" height="8" fill="#fff" stroke="#4c4f56" /><rect x="4" y="5" width="4" height="2" fill="#fff" stroke="#4c4f56" /></svg>
      </button>
      <button type="button" aria-label="Close" className={`${base} ${active ? "border-[#6b1f17] bg-gradient-to-b from-[#e08f81] to-[#c1432f]" : plain}`}>
        <svg width="12" height="12" viewBox="0 0 12 12"><path d="M2 2l8 8M10 2l-8 8" stroke="#4c4f56" strokeWidth="4" /><path d="M2.500 2.500l7 7M9.500 2.500l-7 7" stroke="#fff" strokeWidth="2" /></svg>
      </button>
    </div>
  );
}

function MdiWindow({ title, active, chart, className, children }: { title: string; active?: boolean; chart?: boolean; className: string; children: React.ReactNode }) {
  return (
    <section
      aria-label={title}
      className={`flex min-h-0 min-w-0 flex-col rounded-t-md border px-[7px] pb-[7px] ${active ? "border-black border-b-[#00c8d8] bg-[#b9d1ea]" : "border-[#4b4b4b] bg-[#d7e4f2]"} ${className}`}
    >
      <header className={`-mx-[7px] flex h-[29px] shrink-0 items-center justify-between rounded-t-[5px] border-t border-white/70 pr-[9px] pl-[9px] ${active ? "bg-gradient-to-b from-[#99b4d1] to-[#b9d1ea]" : "bg-gradient-to-b from-[#bfcddb] to-[#d7e4f2]"} pt-1.5`}>
        <div className="flex min-w-0 items-center gap-1">
          {chart && (
            <svg width="16" height="16" viewBox="0 0 16 16" className="shrink-0">
              <rect x="3" y="1" width="10" height="14" fill="#eeeaf6" />
              <path d="M2 9l3 0 2-5 3 6 2-2 3 1" fill="none" stroke="#3a3550" strokeWidth="1.500" />
            </svg>
          )}
          <h2 className={`truncate font-['Open_Sans',sans-serif] text-[11px] ${active ? "text-black" : "text-[#80858b]"}`}>{title}</h2>
        </div>
        <WindowButtons active={active} />
      </header>
      {children}
    </section>
  );
}

const quote = [["N", "-156.05"], ["O", "53104.06"], ["H", "53289.30"], ["L", "52774.17"], ["C", "52899.86"]];

function ChartWindow({ d, active, className, infoClass, twoRow }: { d: ChartData; active?: boolean; className: string; infoClass: string; twoRow?: boolean }) {
  const f = d.frame;
  return (
    <MdiWindow title={d.title} active={active} chart className={className}>
      <div className="relative flex min-h-0 flex-1 flex-col bg-[#c0c0c0] font-['Liberation_Sans',Arial,sans-serif]">
        <div className="flex min-h-0 flex-[307]">
          <div className="relative min-w-0 flex-1 overflow-hidden">
            <Plot f={f} y={d.price.y} h={d.price.h}>
              <Lines items={d.price.lines} />
              <Candles data={d.price.candles} w={d.cw} />
              <Lines items={[{ c: YELLOW, w: 2, p: d.price.zig }]} />
            </Plot>
            {d.price.notes.map((n) => (
              <span
                key={n.t}
                className="absolute -translate-x-1/2 -translate-y-1/2 bg-white px-0.5 text-[14px] leading-4 text-black"
                style={{ left: pct((n.x - f.x) / f.w), top: pct((n.y - d.price.y) / d.price.h) }}
              >
                {n.t}
              </span>
            ))}
          </div>
          <Axis y={d.price.y} h={d.price.h} tags={d.price.axis} />
        </div>
        <div className={twoRow ? "h-[3px] shrink-0 border-b-2 border-white bg-black" : "h-1 shrink-0 border-t border-b-2 border-white bg-black"} />
        <div className="flex min-h-0 flex-[303]">
          <div className="relative min-w-0 flex-1">
            <Plot f={f} y={d.osc.y} h={d.osc.h}>
              {d.osc.levels.map((l) => (
                <line key={l} x1={f.x0} x2={f.x1} y1={l} y2={l} stroke={TEAL} strokeWidth={4} vectorEffect="non-scaling-stroke" />
              ))}
              <Lines items={d.osc.lines} />
            </Plot>
          </div>
          <Axis y={d.osc.y} h={d.osc.h} tags={d.osc.axis} />
        </div>
        <div className={twoRow ? "h-0.5 shrink-0 bg-white" : "h-1 shrink-0 border-t border-b-2 border-white bg-black"} />
        <div className={twoRow ? "flex min-h-0 flex-[305]" : "flex min-h-0 flex-[304]"}>
          <div className="relative min-w-0 flex-1">
            <Plot f={f} y={d.macd.y} h={d.macd.h}>
              <Lines items={d.macd.lines} />
              <Histogram f={f} base={d.macd.base} data={d.macd.hist} />
            </Plot>
          </div>
          <Axis y={d.macd.y} h={d.macd.h} tags={d.macd.axis} />
        </div>
        <div className={twoRow ? "h-0.5 shrink-0 border-b border-white bg-black" : "h-[3px] shrink-0 border-b-2 border-white bg-black"} />
        <div className={twoRow ? "flex min-h-0 flex-[277]" : "flex min-h-0 flex-[285]"}>
          <div className="relative min-w-0 flex-1">
            <Plot f={f} y={d.di.y} h={d.di.h}>
              <rect x={f.x0} width={f.x1 - f.x0} y={d.di.band[0]} height={d.di.band[1] - d.di.band[0]} fill="#b4ccd4" />
              <Lines items={d.di.lines} />
            </Plot>
          </div>
          <Axis y={d.di.y} h={d.di.h} tags={d.di.axis} open={!twoRow} />
        </div>
        <div className="mr-[65px] ml-[5px] h-px shrink-0 bg-black" />
        <div className={`relative mr-[65px] shrink-0 text-[14px] leading-[14px] text-black ${twoRow ? "h-[27px]" : "h-[18px]"}`}>
          {d.dates.map((t) => (
            <span key={t.x} className="absolute top-0 flex -translate-x-1/2 flex-col items-center whitespace-nowrap" style={{ left: pct((t.x - f.x) / f.w) }}>
              <span>{t.t}</span>
              {t.s && <span>{t.s}</span>}
            </span>
          ))}
        </div>
        <div className="flex h-5 shrink-0 items-center bg-[#f4f4f4]">
          <button type="button" className="h-5 w-[14px] rounded-[4px] border border-[#777] bg-white text-[11px] leading-4 text-[#666]">s</button>
          <button type="button" aria-label="Scroll left" className="ml-0.5 h-5 w-[15px] rounded-[5px] border border-[#5f9ea0] bg-[#d3e2f1]" />
          <div className="h-px flex-1 bg-black" />
          <button type="button" className="flex h-[17px] w-10 items-center justify-center overflow-hidden rounded-[4px] border border-[#4f8f98] bg-white text-[13px] leading-4 whitespace-nowrap text-black">
            <i className="mr-px h-3 w-1 border-x border-black" />
            {d.bars}
            <i className="ml-px h-3 w-1 border-x border-black" />
          </button>
          <div className="h-px w-1.5 bg-black" />
          <button type="button" aria-label="Scroll right" className="h-5 w-[15px] rounded-[5px] border border-[#5f9ea0] bg-[#d3e2f1]" />
        </div>
        <dl className="absolute top-px left-px flex h-[18px] border border-[#606060] text-[13px] leading-4 text-black">
          {quote.map(([k, v]) => (
            <div key={k} className="flex">
              <dt className="w-3 bg-[#c0c0c0] text-center">{k}</dt>
              <dd className={`w-[71px] pr-[3px] text-right ${k === "N" ? "bg-[#ff0000]" : "bg-white"}`}>{v}</dd>
            </div>
          ))}
        </dl>
        <ul className={`absolute top-[21px] left-px grid w-28 auto-rows-fr pl-[3px] text-[13px] leading-[15px] whitespace-nowrap text-white ${infoClass}`}>
          {d.info.map((t) => (
            <li key={t}>{t}</li>
          ))}
        </ul>
      </div>
    </MdiWindow>
  );
}

type Row = string;
const indexes: Row[] = "$NDX 29324.08* -373.79|$RUT 2994.14 -15.40||$BIXX 662.23 -0.35|$BKX 187.72* 0.16|$BTK 8920.46 31.30|$DRG 1266.58 19.04|$IXHC 1303.31* 13.60|$REIT 3113.80* 41.67|$SOX 12355.19* -544.95|$XAU 317.99* -8.71|$XCI 17569.82 -71.05|$XNG 830.89 16.70|$XOI 2405.49 26.38||$DJT 21706.29* -164.76|$G63XX 2291.71 1.14|$OEX 3698.42* -2.84|$RLXX 5563.90 31.22||$DJUSCA 485.22 0.52|$DJUSHB 2355.01 -10.33|$DJUSHC 1747.67 20.37|$DJUSHD 131.44 0.83|$DJUSRR 4241.36 -31.01|||".split("|");
const exchanges: Row[] = "$INDU 52899.72* -156.19|$VIX 15.58 0.01|$COMPQ 25960.58* -160.58|$VXN|$SPX 7519.16* -18.27||@YM 53197.00 -175.00|@NQ 29557.75* -383.25|@ES 7569.00* -22.50||@CL 70.48 1.93|@GC 4155.50 -12.00|@SI 61.44 -0.89|@NG 3.27 0.02|@HO 3.30 0.00||~BTCUSD 64013.96 7.93|~ETHUSD 1807.73 9.70|~LTCUSD 44.04 -1.13|||||||||".split("|");
const nyse: Row[] = "ABG 208.78 0.81 15.02|ACN 143.17* 6.20 21.47|ALB 129.25 -4.55 15.39|AMP 507.12 -0.38 23.25|AMR 150.48* -7.07 14.69|ANET 166.54 -6.74 13.12|ASR 289.03 -19.86 11.94|AXP 350.87* -5.16 11.69|AZO 3061.54 103.83 230.28|BA 231.77* -2.77 16.8|BABA 98.25* 0.34 9.55|BAP 387.13 -5.19 39.85|BDX 157.13 1.59 7.3|BH.A 2078.50 -49.92 89.47|BILL 41.00 0.77 2.95|BIO 291.13 -4.02 21|BLK 1009.11* -2.10 65.51|BURL 314.47 2.11 27.88|CABO 43.48 -3.48 8.49|CACI 501.04 -4.20 35.2|CAT 928.99* -40.93 81.94|CHE 482.19* 1.69 28.56|CI 284.92 2.94 10.92|CMI 653.72 -24.53 40.26|COO 72.60 -0.02 4|CPAY 358.10 1.55 16.43|CRM 171.76* 6.11 22.04|CRS 595.17* -24.08 29.5|CVNA 69.58 -0.80 7.65|CVX 172.03* 3.93 7.33|CW 700.10 3.20 20.1".split("|");
const nasdaq: Row[] = "AAPL 312.35* -0.31 14.28|ADBE 226.40 8.33 27.24|ALGN 185.16* -3.23 13.74|ALGT 112.74* -2.88 10.17|ALNY 320.30 7.26 16.74|AMBA 72.82* -6.91 15.05|AMZN 246.27* 2.11 11.62|APP 536.48 -7.31 45.19|APPF 180.92* 4.86 17.05|ARGX 921.68 4.88 59.54|ASML 1754.74 -70.33 147.98|AVGO 371.87* -2.03 48.8|AXON 646.91 24.56 70.82|AXSM 251.58 8.98 16.26|BIDU 112.33 -2.06 12.71|BKNG 181.78* 0.75 8.04|BNTX 94.33 0.40 6.42|CACC 647.64 -9.56 24.81|CAR 153.32 -5.08 15.14|CASY 799.60 -7.58 70.35|CEG 240.28 -5.59 27.59|CHDN 86.69 -2.55 5.41|CHTR 137.81* 2.37 15.9|COIN 166.42* -2.45 21.79|COKE 183.48 -4.41 13.72|COST 946.22* -4.03 44.53|CRMT 3.00 0.02 2.1|CRWD 199.12 -0.26 119.64|CTAS 181.33 3.09 8.65|CVCO 577.26 -9.25 52.01|CVRX 12.10 0.00 1.2".split("|");

function Sheet({ title, rows, heads, cols, tableClass, thumb, selected, className }: { title: string; rows: Row[]; heads: string[]; cols: string[]; tableClass: string; thumb: string; selected?: boolean; className: string }) {
  return (
    <MdiWindow title={title} className={className}>
      <div className="relative flex min-h-0 flex-1 overflow-hidden border border-black bg-[#ababab]">
        <div className="min-w-0 flex-1 overflow-hidden">
          <table className={`table-fixed border-collapse bg-[#ababab] text-black ${tableClass}`}>
            <colgroup>
              {cols.map((c, i) => (
                <col key={i} className={c} />
              ))}
            </colgroup>
            <thead>
              <tr className="h-[21px] bg-white font-['Open_Sans',sans-serif] text-[10px]">
                {heads.map((h, i) => (
                  <th key={h} scope="col" className={`border-r border-b border-r-[#e5e5e5] border-b-[#a0a0a0] p-0 text-left font-normal whitespace-nowrap ${i === 0 ? "pl-2" : "pl-[7px]"}`}>{h}</th>
                ))}
              </tr>
            </thead>
            <tbody className="font-['Liberation_Sans',Arial,sans-serif] text-[11px]">
              {rows.map((r, i) => {
                const [sym, last = "", net = "", wave = ""] = r.split(" ");
                const empty = r === "";
                const hot = last.endsWith("*");
                const netBg = net === "" || +net === 0 ? "bg-white" : +net < 0 ? "bg-[#ff0000]" : "bg-[#32cd32]";
                const cell = "border-r border-b border-[#a0a0a0] p-0";
                return (
                  <tr key={i} className="h-5">
                    <td className={`${cell} pl-[3px] ${empty ? "" : "bg-white"}`}>{sym}</td>
                    <td className={`${cell} pr-1 text-right ${empty ? "" : hot ? "bg-[#f0ff00]" : "bg-white"}`}>{last.replace("*", "")}</td>
                    <td className={`${cell} pr-1 text-right ${empty ? "" : netBg}`}>{net}</td>
                    {heads.length > 3 && <td className={`${cell} pr-1 text-right ${empty ? "" : "bg-white"}`}>{wave}</td>}
                  </tr>
                );
              })}
            </tbody>
          </table>
        </div>
        {selected && <div className="absolute top-5 right-[17px] left-0 h-[22px] border-2 border-black" />}
        <div className="w-[17px] shrink-0 border-l border-white bg-[#f0f0f0] pt-4 pl-2">
          <div className={`w-0.5 bg-[#858585] ${thumb}`} />
        </div>
      </div>
    </MdiWindow>
  );
}

const Sep = () => <i className="h-5 w-px shrink-0 bg-[#9ab8e0]" />;
const Grip = () => <i className="h-[18px] w-[3px] shrink-0 border-l-2 border-dotted border-[#7896c8]" />;

function ChartIcon({ stroke, arrow }: { stroke: string; arrow?: boolean }) {
  return (
    <svg width="16" height="16" viewBox="0 0 16 16" className="shrink-0">
      <rect x="0.500" y="1.500" width="15" height="14" fill="#fff" stroke="#333" />
      <rect x="0" y="1" width="16" height="3" fill="#333" />
      <path d="M2 13l3-5 3 3 3-5 3 2" fill="none" stroke={stroke} strokeWidth="2" />
      {arrow && <path d="M12 9V1M9 4l3-3.500L15 4" fill="none" stroke="#15902c" strokeWidth="2" />}
    </svg>
  );
}

function NoiseIcon() {
  return (
    <svg width="16" height="16" viewBox="0 0 16 16" className="shrink-0">
      <rect x="0.500" y="1.500" width="15" height="14" fill="#fff" stroke="#333" />
      <rect x="0" y="1" width="16" height="3" fill="#333" />
      <path d="M1 13l3-4 3 3 4-5 4 3" fill="none" stroke="#d8281e" strokeWidth="2" />
      <path d="M1 10l3-3 3 3 4-4 4 2" fill="none" stroke="#2c9a3c" strokeWidth="1.500" />
    </svg>
  );
}

function TrendIcon({ dots, short }: { dots: number; short?: boolean }) {
  return (
    <svg width="16" height="16" viewBox="0 0 16 16" className="shrink-0">
      <path d={short ? "M4 13L12 3" : "M1 15L14 1"} stroke="#00008b" />
      {dots > 1 && <rect x="10" y="3" width="3" height="2" fill="#00b400" />}
      <rect x="3" y="11" width="3" height="2" fill="#00b400" />
    </svg>
  );
}

function ArrowsIcon({ inner, narrow }: { inner: string; narrow?: boolean }) {
  return (
    <svg width="16" height="16" viewBox="0 0 16 16" className="shrink-0">
      <path d={inner} fill={narrow ? "none" : "#fff"} stroke="#222" strokeWidth="1.500" />
      {narrow ? <path d="M6 8h4M10 8l-2-2v4zM6 8l2-2v4z" fill="#222" stroke="#222" strokeWidth=".5" /> : <path d="M16 8l-3-3v6zM0 8l3-3v6z" fill="#222" />}
    </svg>
  );
}

function ToolText({ children, gap }: { children: React.ReactNode; gap: string }) {
  return (
    <button type="button" className={`flex shrink-0 items-center whitespace-nowrap ${gap}`}>
      {children}
    </button>
  );
}

const strip = "flex h-[26px] shrink-0 items-center rounded-[3px] border-b border-[#6f9dd9] bg-gradient-to-b from-[#e3efff] via-[#cfe2fc] to-[#a8c8f2]";

function Toolbar() {
  return (
    <div role="toolbar" aria-label="Main" className="flex h-[29px] shrink-0 items-center bg-[#bfdbff] pl-[3px] text-[11px] text-[#15356b]">
      <div className={`${strip} w-[1178px] pl-[3px]`}>
        <Grip />
        <label htmlFor="symbol" className="w-[53px] shrink-0 pl-[6px] font-bold">Symbol</label>
        <span className="relative shrink-0">
          <select id="symbol" className="h-5 w-[121px] appearance-none rounded-[2px] border border-[#8a8a8a] bg-white pl-1 font-bold text-black">
            <option>$INDU</option>
          </select>
          <ChevronDown className="pointer-events-none absolute top-1 right-1 size-3 text-[#444]" />
        </span>
        <span className="flex w-[9px] shrink-0 justify-center"><Sep /></span>
        <span className="relative shrink-0">
          <select aria-label="Help topic" className="h-[22px] w-[90px] appearance-none rounded-[2px] border border-[#8a8a8a] bg-white pl-1 text-[#777]">
            <option>Help</option>
          </select>
          <ChevronDown className="pointer-events-none absolute top-[5px] right-1 size-3 text-[#444]" />
        </span>
        <span className="flex w-2 shrink-0 justify-center"><Sep /></span>
        <ToolText gap="w-[86px] gap-1"><ChartIcon stroke="#333" arrow />New Chart</ToolText>
        <ToolText gap="w-[106px]">Multi-Minute Bars</ToolText>
        <Sep />
        <ToolText gap="w-[78px] gap-[3px] pl-1"><ChartIcon stroke="#f08c1e" />Games<span className="ml-auto pr-2 text-[8px]">▾</span></ToolText>
        <ToolText gap="w-[100px] gap-[5px]"><NoiseIcon />Hide Noise<span className="ml-auto pr-1 text-[8px]">▾</span></ToolText>
        <ToolText gap="w-[87px] gap-[5px]"><NoiseIcon />7 Middle 7</ToolText>
        <ToolText gap="w-[101px]">Chart Preferences</ToolText>
        <ToolText gap="w-[92px] gap-[3px]">
          <svg width="16" height="16" viewBox="0 0 16 16" className="shrink-0"><path d="M1 1h14v11l-3 3H1z" fill="#e01818" stroke="#222" /><path d="M3 4h10M3 7h10M3 10h8" stroke="#222" strokeWidth="1.500" /></svg>
          Report Issue
        </ToolText>
        <Sep />
        <div className="flex shrink-0 items-center gap-[7px] pr-2.5 pl-1.5 text-[#222]">
          <button type="button" aria-label="Calculator"><Calculator className="size-4" /></button>
          <button type="button" aria-label="Quote sheet"><ChartIcon stroke="#777" arrow /></button>
          <button type="button" aria-label="Notes">
            <svg width="16" height="16" viewBox="0 0 16 16"><path d="M1.500 1h13v10.500l-3 3.500h-10z" fill="#fff" stroke="#222" strokeWidth="1.500" /><path d="M4 4h8M4 7h8M4 10h8" stroke="#222" strokeWidth="1.500" /></svg>
          </button>
          <button type="button" aria-label="Alerts"><Bell className="size-4" fill="#222" /></button>
          <button type="button" aria-label="Link"><Link2 className="size-4 -rotate-45" /></button>
          <button type="button" aria-label="Hot">
            <svg width="16" height="16" viewBox="0 0 16 16"><path d="M8 0c1 3 5 5 5 10a5 5 0 0 1-10 0c0-2 1-3 1-5l2 2c1-2 2-4 2-7z" fill="#e8281a" /><path d="M8 7c1 2 2.500 3 2.500 5a2.500 2.500 0 0 1-5 0c0-2 2-3 2.500-5z" fill="#ffc61e" /></svg>
          </button>
        </div>
        <ToolText gap="w-14">Earnings</ToolText>
        <ToolText gap="">Splits</ToolText>
      </div>
      <div className={`${strip} ml-px w-[246px] pl-[3px]`}>
        <Grip />
        <div className="flex flex-1 items-center justify-between pr-1.5 pl-2">
          <svg width="12" height="16" viewBox="0 0 12 16"><path d="M1 1v12l3-3 2 5 2-1-2-4h4z" fill="#fff" stroke="#888" /></svg>
          <TrendIcon dots={2} />
          <TrendIcon dots={2} short />
          <TrendIcon dots={1} />
          <svg width="18" height="16" viewBox="0 0 18 16"><path d="M0 8h18" stroke="#00008b" strokeWidth="1.500" /></svg>
          <i className="mx-1 h-4 w-px bg-black" />
          <svg width="16" height="16" viewBox="0 0 16 16"><path d="M4 3h11M1 8h14M3 13h12" stroke="#1e1ee0" /></svg>
          <b className="font-['Liberation_Serif',serif] text-[18px] leading-4 text-[#00008b]">T</b>
          <svg width="16" height="16" viewBox="0 0 16 16"><path d="M2 2c4-2 6 1 12-1v9c-4 1-6-2-9 0l1 6H4z" fill="#d81420" /></svg>
          <svg width="16" height="16" viewBox="0 0 16 16"><path d="M1 1v14h9" fill="none" stroke="#557" /><path d="M2 12L7 3l6 8" fill="none" stroke="#3a6ad0" strokeWidth="1.500" /><path d="M2 4l10 8" stroke="#d84040" strokeWidth="1.500" /><circle cx="12" cy="12" r="3.500" fill="#5cb038" /></svg>
        </div>
      </div>
      <div className={`${strip} ml-0.5 w-[125px] pl-[3px]`}>
        <Grip />
        <div className="flex flex-1 items-center justify-between pr-1.5 pl-[5px]">
          <ChartIcon stroke="#2f8fd8" />
          <ArrowsIcon inner="M5.500 2.500h5v11h-5zM8 0v2M8 14v2" />
          <ArrowsIcon inner="M6.500 3.500h3v9h-3zM8 0v3M8 13v3" />
          <ArrowsIcon inner="M0 1h3v14H0M16 1h-3v14h3" narrow />
          <ArrowsIcon inner="M4 1h3v14H4M12 1H9v14h3" />
        </div>
      </div>
    </div>
  );
}

export default function App() {
  return (
    <div className="flex h-screen min-h-[700px] flex-col overflow-hidden bg-[#f0f0f0] font-['Open_Sans',sans-serif] text-[11px] text-black">
      <header className="flex h-[23px] shrink-0 items-center bg-[#f2f2f2] pl-[3px]">
        <svg width="16" height="16" viewBox="0 0 16 16">
          <circle cx="8" cy="9" r="6" fill="none" stroke="#111" strokeWidth="1.500" />
          <path d="M8 0v9M8 5L3 13M8 5l5 8M5 10h6" fill="none" stroke="#111" strokeWidth="1.500" />
        </svg>
        <h1 className="pl-[5px]">AlchemCharts - Default_06032026</h1>
        <div className="ml-auto flex items-center gap-9 pr-[18px]">
          <button type="button" aria-label="Minimize application"><svg width="10" height="10" viewBox="0 0 10 10"><path d="M0 5.500h10" stroke="#111" /></svg></button>
          <button type="button" aria-label="Restore application"><svg width="10" height="10" viewBox="0 0 10 10"><rect x=".5" y="2.500" width="7" height="7" rx="1" fill="none" stroke="#111" /><path d="M3 .5h5.500a1 1 0 0 1 1 1V7" fill="none" stroke="#111" /></svg></button>
          <button type="button" aria-label="Close application"><svg width="10" height="10" viewBox="0 0 10 10"><path d="M0 0l10 10M10 0L0 10" stroke="#111" /></svg></button>
        </div>
      </header>
      <nav aria-label="Menu" className="flex h-6 shrink-0 items-center gap-[19px] border-b-2 border-[#a9c4ea] bg-[#bfdbff] pl-[15px] text-[#15428b]">
        {["File", "Chart", "Draw", "Quotesheet", "Screener", "Window", "Help"].map((m) => (
          <button key={m} type="button">{m}</button>
        ))}
      </nav>
      <Toolbar />
      <main className="flex min-h-0 flex-1 border-t-2 border-l-2 border-[#808080] bg-[#f5f9fd] pr-px pb-[2px] pl-[9px]">
        <ChartWindow d={daily} className="mt-px mr-[3px] flex-[884]" infoClass="h-[414px] bg-[#8b0000]" />
        <ChartWindow d={threeDay} active className="mt-px mr-[3px] flex-[1112]" infoClass="h-[414px] bg-[#8b0000]" />
        <ChartWindow d={intraday} twoRow className="mt-0.5 mb-px flex-[893]" infoClass="h-[460px] bg-[#a52a2a]" />
        <div className="flex min-h-0 min-w-0 flex-[484] flex-col">
          <div className="flex min-h-0 flex-[623]">
            <Sheet title="Indexes" rows={indexes} heads={["Symbol", "Last", "Net"]} cols={["w-[70px]", "w-[60px]", "w-[60px]"]} tableClass="w-[190px]" thumb="h-[75px]" className="mb-[5px] ml-1 flex-[215]" />
            <Sheet title="Exchanges" rows={exchanges} heads={["Symbol", "Last", "Net"]} cols={["w-[70px]", "w-[60px]", "w-[60px]"]} tableClass="w-[190px]" thumb="h-[77px]" selected className="mt-0.5 ml-px flex-[232]" />
          </div>
          <div className="flex min-h-0 flex-[665]">
            <Sheet title="NYSE" rows={nyse} heads={["Sym...", "Last", "Net", "Wave Avg"]} cols={["w-[47px]", "w-[47px]", "w-[44px]", "w-[64px]"]} tableClass="w-[202px]" thumb="h-[90px]" className="flex-[222]" />
            <Sheet title="NASDAQ" rows={nasdaq} heads={["Sym...", "Last", "Net", "Wave Avg"]} cols={["w-[47px]", "w-[54px]", "w-[38px]", "w-[64px]"]} tableClass="w-[203px]" thumb="h-[90px]" className="ml-[5px] flex-[225]" />
          </div>
        </div>
      </main>
      <footer className="flex h-[26px] shrink-0 items-center justify-end border-t border-[#d0d0d0] bg-[#f0f0f0] pr-[19px] whitespace-nowrap">
        <i className="mr-[5px] h-[18px] w-px bg-[#808080]" />
        <span className="w-[120px]">305/500 Symbols Max</span>
        <span className="w-[59px] bg-[#00ff00] text-center leading-[15px]">Data Feed</span>
        <button type="button" className="flex w-[168px] items-center justify-between pr-[6px] pl-[5px]">Historical Data: Main Server<span className="text-[8px]">▼</span></button>
        <button type="button" className="flex w-[135px] items-center justify-between pr-2 pl-[5px]">Live Server: Server #1<span className="text-[8px]">▼</span></button>
        <span className="w-[157px] pl-[5px]">C:2.52, B:0.57, I:0.27, IH:0.23</span>
        <span className="w-[76px] bg-[#90ee90] text-center leading-[15px]">Market Open</span>
        <span className="w-[71px] pl-[7px]">14:12:41 EDT</span>
      </footer>
    </div>
  );
}
